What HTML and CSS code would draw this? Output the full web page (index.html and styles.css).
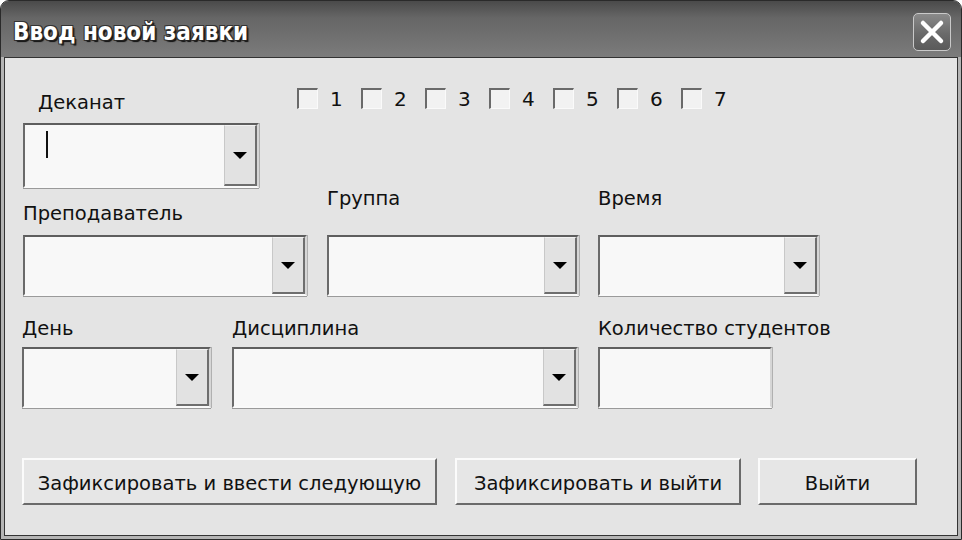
FILE: index.html
```html
<!DOCTYPE html>
<html lang="ru">
<head>
<meta charset="utf-8">
<title>Ввод новой заявки</title>
<link rel="stylesheet" href="styles.css">
</head>
<body>
<div class="window">
  <div class="titlebar">
    <span class="title">Ввод новой заявки</span>
    <span class="close">
      <svg width="26" height="26" viewBox="0 0 26 26"><path d="M4 4 L22 22 M22 4 L4 22" stroke="#fff" stroke-width="4.5" stroke-linecap="round"/></svg>
    </span>
  </div>
  <div class="body">
    <div class="row row1">
      <div class="field dek">
        <div class="label ind">Деканат</div>
        <div class="combo tall"><span class="caret"></span><span class="drop"><i></i></span></div>
      </div>
      <div class="checks">
        <label class="chk"><span class="box"></span>1</label>
        <label class="chk"><span class="box"></span>2</label>
        <label class="chk"><span class="box"></span>3</label>
        <label class="chk"><span class="box"></span>4</label>
        <label class="chk"><span class="box"></span>5</label>
        <label class="chk"><span class="box"></span>6</label>
        <label class="chk"><span class="box"></span>7</label>
      </div>
    </div>
    <div class="row row2">
      <div class="field w-prep">
        <div class="label low">Преподаватель</div>
        <div class="combo"><span class="drop"><i></i></span></div>
      </div>
      <div class="field w-grp">
        <div class="label high">Группа</div>
        <div class="combo"><span class="drop"><i></i></span></div>
      </div>
      <div class="field w-time">
        <div class="label high">Время</div>
        <div class="combo"><span class="drop"><i></i></span></div>
      </div>
    </div>
    <div class="row row3">
      <div class="field w-day">
        <div class="label">День</div>
        <div class="combo"><span class="drop"><i></i></span></div>
      </div>
      <div class="field w-disc">
        <div class="label">Дисциплина</div>
        <div class="combo"><span class="drop"><i></i></span></div>
      </div>
      <div class="field w-cnt">
        <div class="label nowrap">Количество студентов</div>
        <div class="combo text"></div>
      </div>
    </div>
    <div class="row row4">
      <button class="btn b1">Зафиксировать и ввести следующую</button>
      <button class="btn b2">Зафиксировать и выйти</button>
      <button class="btn b3">Выйти</button>
    </div>
  </div>
</div>
</body>
</html>
```
FILE: styles.css
```css
* { box-sizing: border-box; }
html, body { margin: 0; padding: 0; }
body {
  width: 962px;
  height: 540px;
  background: #ffffff;
  font-family: "DejaVu Sans", sans-serif;
  color: #111;
  overflow: hidden;
}
.window {
  width: 962px;
  height: 540px;
  border: 1px solid #2a2a2a;
  border-radius: 9px 9px 0 0;
  background: #b4b4b4;
  display: flex;
  flex-direction: column;
  overflow: hidden;
}
.titlebar {
  height: 56px;
  flex: none;
  display: flex;
  align-items: center;
  justify-content: space-between;
  padding: 0 10px 0 12px;
  background: linear-gradient(#4a4a4a 0%, #666 30%, #727272 70%, #7c7c7c 100%);
}
.title {
  font-family: "DejaVu Sans Condensed", "DejaVu Sans", sans-serif;
  font-weight: bold;
  font-size: 24px;
  color: #fff;
  text-shadow: 1px 1px 0 #222, -1px -1px 0 #333, 1px -1px 0 #333, -1px 1px 0 #333, 2px 2px 1px #111;
  margin-top: 6px;
}
.close {
  width: 38px;
  height: 38px;
  border: 1px solid #c9c9c9;
  border-radius: 5px;
  background: linear-gradient(#8a8a8a, #6a6a6a 55%, #5a5a5a);
  display: flex;
  align-items: center;
  justify-content: center;
  margin-top: 6px;
}
.body {
  flex: 1;
  margin: 0 3px 3px 3px;
  border: 1px solid #333;
  background: #e4e4e4;
  padding: 0 0 0 17px;
}
.row { display: flex; }
.row1 { margin-top: 31px; align-items: flex-start; }
.row2 { align-items: flex-end; }
.row3 { margin-top: 22px; align-items: flex-end; }
.row4 { margin-top: 50px; }
.field { display: flex; flex-direction: column; }
.label {
  font-size: 19.5px;
  line-height: 22px;
  height: 22px;
  margin-bottom: 7px;
  white-space: nowrap;
}
.label.ind { padding-left: 15px; margin-top: 3px; margin-bottom: 9px; }
.label.low { margin-bottom: 10px; }
.label.high { margin-bottom: 25px; }
.dek { width: 236px; margin-left: 1px; }
.w-prep { width: 284px; margin-left: 1px; }
.w-grp { width: 252px; margin-left: 20px; }
.w-time { width: 221px; margin-left: 19px; }
.w-day { width: 189px; }
.w-disc { width: 346px; margin-left: 21px; }
.w-cnt { width: 174px; margin-left: 20px; }
.combo {
  position: relative;
  height: 61px;
  background: #f8f8f8;
  border-top: 2px solid #5e5e5e;
  border-left: 2px solid #6a6a6a;
  border-right: 2px solid #d6d6d6;
  border-bottom: 2px solid #fafafa;
  box-shadow: 0 1px 0 #9a9a9a, 1px 0 0 #b0b0b0;
  display: flex;
  justify-content: flex-end;
}
.combo.tall { height: 65px; }
.drop {
  width: 33px;
  height: 100%;
  background: #e2e2e2;
  border-left: 1px solid #c8c8c8;
  border-top: 1px solid #f2f2f2;
  border-right: 2px solid #6e6e6e;
  border-bottom: 2px solid #6e6e6e;
  display: flex;
  align-items: center;
  justify-content: center;
}
.drop i {
  width: 0;
  height: 0;
  border-left: 7px solid transparent;
  border-right: 7px solid transparent;
  border-top: 7px solid #000;
}
.caret {
  position: absolute;
  left: 21px;
  top: 6px;
  width: 2px;
  height: 27px;
  background: #111;
}
.checks {
  display: flex;
  margin-left: 38px;
  margin-top: -1px;
}
.chk {
  display: flex;
  align-items: center;
  width: 64px;
  font-size: 20px;
  line-height: 20px;
}
.box {
  width: 21px;
  height: 21px;
  margin-right: 12px;
  background: #f2f2f2;
  border-top: 2px solid #6a6a6a;
  border-left: 2px solid #6a6a6a;
  border-right: 1px solid #fafafa;
  border-bottom: 1px solid #fafafa;
}
.btn {
  height: 47px;
  font-family: inherit;
  font-size: 19.5px;
  color: #111;
  background: #e6e6e6;
  border-top: 2px solid #fbfbfb;
  border-left: 2px solid #fbfbfb;
  border-right: 2px solid #6a6a6a;
  border-bottom: 2px solid #6a6a6a;
  padding: 3px 0 0 0;
}
.b1 { width: 415px; }
.b2 { width: 286px; margin-left: 18px; }
.b3 { width: 159px; margin-left: 17px; }
```
